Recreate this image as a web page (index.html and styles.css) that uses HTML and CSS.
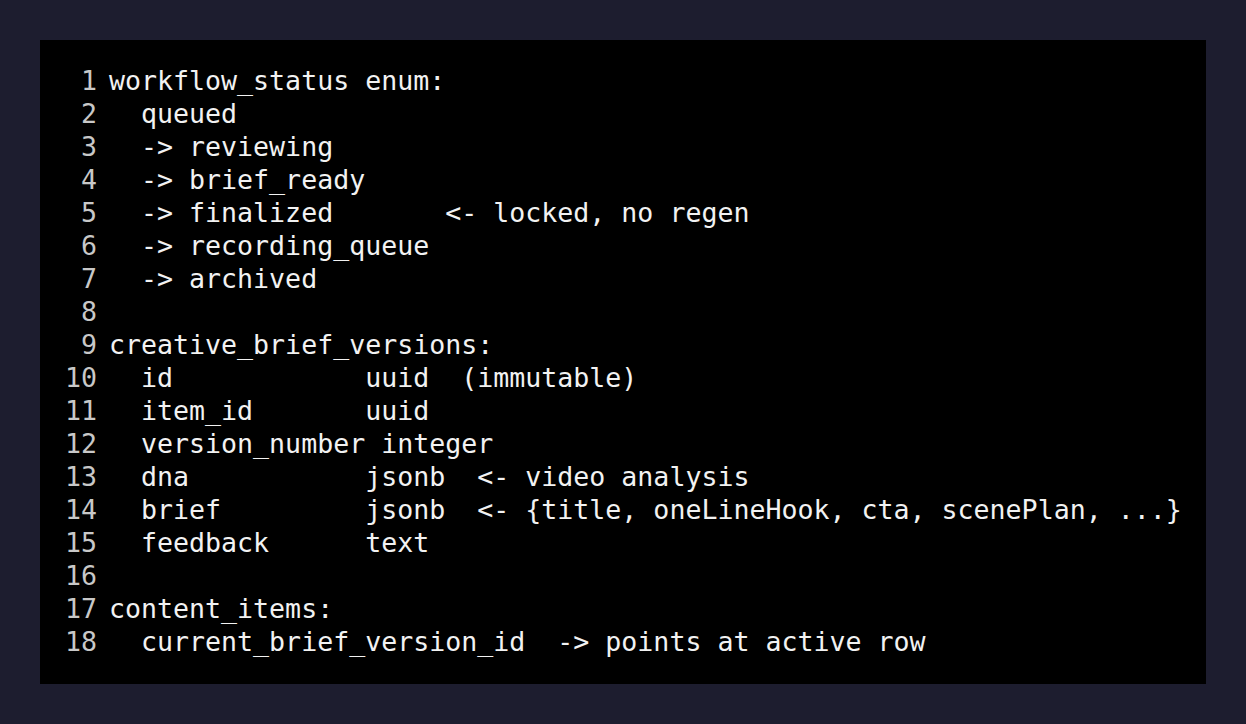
FILE: index.html
```html
<!DOCTYPE html>
<html>
<head>
<meta charset="utf-8">
<link rel="stylesheet" href="styles.css">
</head>
<body>
<div class="code">
<div class="ln"><span class="no">1</span><span class="tx">workflow_status enum:</span></div>
<div class="ln"><span class="no">2</span><span class="tx">  queued</span></div>
<div class="ln"><span class="no">3</span><span class="tx">  -&gt; reviewing</span></div>
<div class="ln"><span class="no">4</span><span class="tx">  -&gt; brief_ready</span></div>
<div class="ln"><span class="no">5</span><span class="tx">  -&gt; finalized       &lt;- locked, no regen</span></div>
<div class="ln"><span class="no">6</span><span class="tx">  -&gt; recording_queue</span></div>
<div class="ln"><span class="no">7</span><span class="tx">  -&gt; archived</span></div>
<div class="ln"><span class="no">8</span><span class="tx"></span></div>
<div class="ln"><span class="no">9</span><span class="tx">creative_brief_versions:</span></div>
<div class="ln"><span class="no">10</span><span class="tx">  id            uuid  (immutable)</span></div>
<div class="ln"><span class="no">11</span><span class="tx">  item_id       uuid</span></div>
<div class="ln"><span class="no">12</span><span class="tx">  version_number integer</span></div>
<div class="ln"><span class="no">13</span><span class="tx">  dna           jsonb  &lt;- video analysis</span></div>
<div class="ln"><span class="no">14</span><span class="tx">  brief         jsonb  &lt;- {title, oneLineHook, cta, scenePlan, ...}</span></div>
<div class="ln"><span class="no">15</span><span class="tx">  feedback      text</span></div>
<div class="ln"><span class="no">16</span><span class="tx"></span></div>
<div class="ln"><span class="no">17</span><span class="tx">content_items:</span></div>
<div class="ln"><span class="no">18</span><span class="tx">  current_brief_version_id  -&gt; points at active row</span></div>
</div>
</body>
</html>
```
FILE: styles.css
```css
html, body {
  margin: 0;
  padding: 0;
  background: #1d1d2f;
}
body {
  padding: 40px;
  width: 1166px;
}
.code {
  background: #000000;
  height: 644px;
  box-sizing: border-box;
  padding: 24px 0 0 25px;
  font-family: "DejaVu Sans Mono", "Liberation Mono", monospace;
  font-size: 26.6px;
  line-height: 33px;
  color: #f2f2f2;
}
.ln {
  display: flex;
  height: 33px;
  white-space: pre;
}
.no {
  width: 32px;
  text-align: right;
  color: #c8c8c8;
  margin-right: 12px;
  flex: none;
}
.tx {
  white-space: pre;
}
```
